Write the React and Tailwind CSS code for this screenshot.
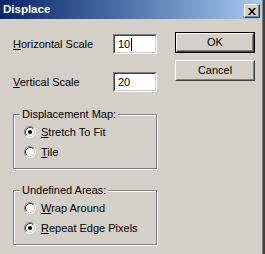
import React from "react";

function Radio({ checked }) {
  return (
    <svg width="12" height="12" viewBox="0 0 12 12" className="shrink-0">
      <circle cx="6" cy="6" r="4.5" fill="white" />
      <path d="M2.11 9.89 A5.5 5.5 0 0 1 9.89 2.11" fill="none" stroke="#808080" strokeWidth="1" />
      <path d="M9.89 2.11 A5.5 5.5 0 0 1 2.11 9.89" fill="none" stroke="#ffffff" strokeWidth="1" />
      <path d="M2.82 9.18 A4.5 4.5 0 0 1 9.18 2.82" fill="none" stroke="#404040" strokeWidth="1" />
      <path d="M9.18 2.82 A4.5 4.5 0 0 1 2.82 9.18" fill="none" stroke="#d4d0c8" strokeWidth="1" />
      {checked && <circle cx="6" cy="6" r="2" fill="black" />}
    </svg>
  );
}

function RadioRow({ checked, children }) {
  return (
    <div className="h-[20px] flex items-center">
      <Radio checked={checked} />
      <span className="ml-[5px] text-black">{children}</span>
    </div>
  );
}

function GroupBox({ title, children, className = "" }) {
  return (
    <div
      className={`relative w-[144px] h-[55px] border border-[#808080] shadow-[inset_1px_1px_0_#ffffff,1px_1px_0_#ffffff] pl-[10px] pt-[7px] ${className}`}
    >
      <span className="absolute left-[6px] top-[-7px] px-[2px] bg-[#d4d0c8] leading-[13px]">
        {title}
      </span>
      {children}
    </div>
  );
}

function TextBox({ value, caret }) {
  return (
    <div className="w-[44px] h-[20px] border border-t-[#808080] border-l-[#808080] border-b-white border-r-white">
      <div className="w-full h-full border border-t-[#404040] border-l-[#404040] border-b-[#d4d0c8] border-r-[#d4d0c8] bg-white flex items-center pl-[3px]">
        <span className="leading-[13px]">{value}</span>
        {caret && <span className="inline-block w-px h-[13px] bg-black ml-[1px]" />}
      </div>
    </div>
  );
}

function Button({ children, isDefault }) {
  const bevel = (
    <div className="w-full h-full border border-t-white border-l-white border-b-[#404040] border-r-[#404040]">
      <div className="w-full h-full border border-t-[#d4d0c8] border-l-[#d4d0c8] border-b-[#808080] border-r-[#808080] flex items-center justify-center">
        {children}
      </div>
    </div>
  );
  return (
    <div className={`w-[80px] h-[21px] ${isDefault ? "border border-black" : ""}`}>{bevel}</div>
  );
}

export default function App() {
  return (
    <div className="w-[265px] h-[254px] flex bg-[#d4d0c8] font-['Liberation_Sans',Arial,sans-serif] text-[11px] text-black overflow-hidden">
      <div className="w-[262px] flex flex-col">
        <div className="w-[261px] h-[19px] bg-gradient-to-r from-[#0a246a] to-[#a6caf0] flex items-start">
          <span className="ml-[3px] mt-[3px] text-white font-bold text-[11.5px] leading-[13px]">
            Displace
          </span>
          <div className="ml-auto mr-[1px] mt-[4px] w-[16px] h-[14px] border border-t-white border-l-white border-b-[#404040] border-r-[#404040] bg-[#d4d0c8]">
            <div className="w-full h-full border border-t-[#d4d0c8] border-l-[#d4d0c8] border-b-[#808080] border-r-[#808080] flex items-center justify-center">
              <svg width="8" height="7" viewBox="0 0 8 7">
                <path d="M0 0h2l2 2.5L6 0h2L5 3.5 8 7H6L4 4.5 2 7H0l3-3.5z" fill="black" />
              </svg>
            </div>
          </div>
        </div>
        <div className="flex flex-row">
          <div className="pl-[13px] pt-[15px] w-[175px]">
            <div className="w-[144px] h-[20px] flex items-center justify-between">
              <span>
                <u>H</u>orizontal Scale
              </span>
              <TextBox value="10" caret />
            </div>
            <div className="mt-[18px] w-[144px] h-[20px] flex items-center justify-between">
              <span>
                <u>V</u>ertical Scale
              </span>
              <TextBox value="20" />
            </div>
            <GroupBox title="Displacement Map:" className="mt-[22px]">
              <RadioRow checked>
                <u>S</u>tretch To Fit
              </RadioRow>
              <RadioRow>
                <u>T</u>ile
              </RadioRow>
            </GroupBox>
            <GroupBox title="Undefined Areas:" className="mt-[21px]">
              <RadioRow>
                <u>W</u>rap Around
              </RadioRow>
              <RadioRow checked>
                <u>R</u>epeat Edge Pixels
              </RadioRow>
            </GroupBox>
          </div>
          <div className="pt-[13px] flex flex-col gap-[7px]">
            <Button isDefault>OK</Button>
            <Button>Cancel</Button>
          </div>
        </div>
      </div>
      <div className="w-px h-full bg-[#808080]" />
      <div className="w-[2px] h-full bg-[#404040]" />
    </div>
  );
}
